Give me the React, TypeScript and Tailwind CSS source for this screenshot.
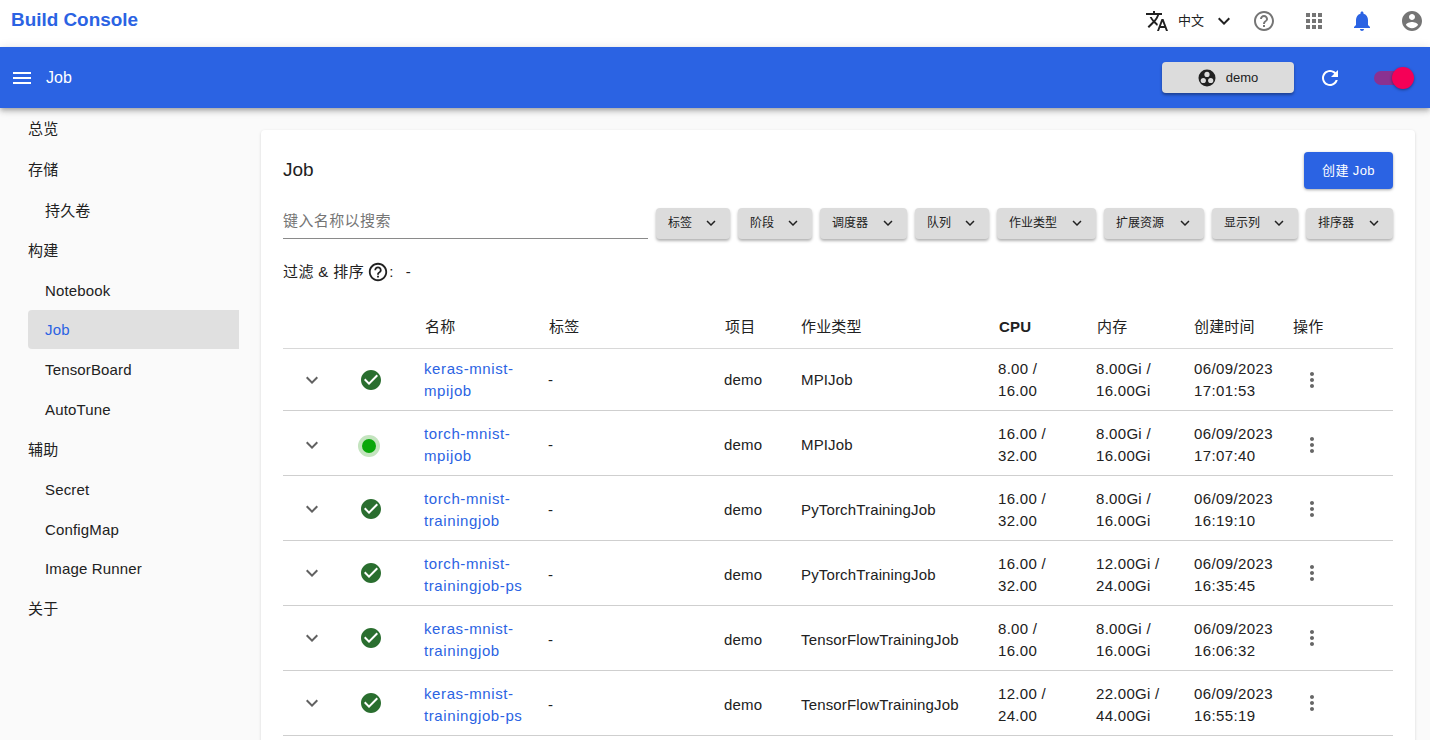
import React from "react";

const P = {
  translate: "m12.87 15.07-2.54-2.51.03-.03c1.74-1.94 2.98-4.17 3.71-6.53H17V4h-7V2H8v2H1v1.99h11.17C11.5 7.92 10.43 9.75 9 11.35 8.07 10.32 7.3 9.19 6.69 8h-2c.73 1.63 1.73 3.17 2.98 4.56l-5.09 5.02L4 19l5-5 3.11 3.11.76-2.04zM18.5 10h-2L12 22h2l1.12-3h4.75L21 22h2l-4.5-12zm-2.62 7 1.62-4.33L19.12 17h-3.24z",
  help: "M11 18h2v-2h-2v2zm1-16C6.48 2 2 6.48 2 12s4.48 10 10 10 10-4.48 10-10S17.52 2 12 2zm0 18c-4.41 0-8-3.59-8-8s3.59-8 8-8 8 3.59 8 8-3.59 8-8 8zm0-14c-2.21 0-4 1.79-4 4h2c0-1.1.9-2 2-2s2 .9 2 2c0 2-3 1.75-3 5h2c0-2.25 3-2.5 3-5 0-2.21-1.79-4-4-4z",
  apps: "M4 8h4V4H4v4zm6 12h4v-4h-4v4zm-6 0h4v-4H4v4zm0-6h4v-4H4v4zm6 0h4v-4h-4v4zm6-10v4h4V4h-4zm-6 4h4V4h-4v4zm6 6h4v-4h-4v4zm0 6h4v-4h-4v4z",
  bell: "M12 22c1.1 0 2-.9 2-2h-4c0 1.1.89 2 2 2zm6-6v-5c0-3.07-1.64-5.64-4.5-6.32V4c0-.83-.67-1.5-1.5-1.5s-1.5.67-1.5 1.5v.68C7.63 5.36 6 7.92 6 11v5l-2 2v1h16v-1l-2-2z",
  account: "M12 2C6.48 2 2 6.48 2 12s4.48 10 10 10 10-4.48 10-10S17.52 2 12 2zm0 3c1.66 0 3 1.34 3 3s-1.34 3-3 3-3-1.34-3-3 1.34-3 3-3zm0 14.2c-2.5 0-4.71-1.28-6-3.22.03-1.99 4-3.08 6-3.08 1.99 0 5.97 1.09 6 3.08-1.29 1.94-3.5 3.22-6 3.22z",
  menu: "M3 18h18v-2H3v2zm0-5h18v-2H3v2zm0-7v2h18V6H3z",
  refresh: "M17.65 6.35C16.2 4.9 14.21 4 12 4c-4.42 0-7.99 3.58-7.99 8s3.57 8 7.99 8c3.73 0 6.84-2.55 7.73-6h-2.08c-.82 2.33-3.04 4-5.65 4-3.31 0-6-2.69-6-6s2.69-6 6-6c1.66 0 3.14.69 4.22 1.78L13 11h7V4l-2.35 2.35z",
  expand: "M16.59 8.59 12 13.17 7.41 8.59 6 10l6 6 6-6z",
  check: "M12 2C6.48 2 2 6.48 2 12s4.48 10 10 10 10-4.48 10-10S17.52 2 12 2zm-2 15-5-5 1.41-1.41L10 14.17l7.59-7.59L19 8l-9 9z",
  more: "M12 8c1.1 0 2-.9 2-2s-.9-2-2-2-2 .9-2 2 .9 2 2 2zm0 2c-1.1 0-2 .9-2 2s.9 2 2 2 2-.9 2-2-.9-2-2-2zm0 6c-1.1 0-2 .9-2 2s.9 2 2 2 2-.9 2-2-.9-2-2-2z",
};

function Icon({ d, className }: { d: string; className: string }) {
  return (
    <svg viewBox="0 0 24 24" fill="currentColor" className={className}>
      <path d={d} />
    </svg>
  );
}

const nav: { label: string; h: string; sub?: boolean; active?: boolean }[] = [
  { label: "总览", h: "h-[41px]" },
  { label: "存储", h: "h-[41px]" },
  { label: "持久卷", sub: true, h: "h-[40px]" },
  { label: "构建", h: "h-[40px]" },
  { label: "Notebook", sub: true, h: "h-[40px]" },
  { label: "Job", sub: true, active: true, h: "h-[39px]" },
  { label: "TensorBoard", sub: true, h: "h-[40.5px]" },
  { label: "AutoTune", sub: true, h: "h-[39.5px]" },
  { label: "辅助", h: "h-[40px]" },
  { label: "Secret", sub: true, h: "h-[40px]" },
  { label: "ConfigMap", sub: true, h: "h-[39.5px]" },
  { label: "Image Runner", sub: true, h: "h-[39.5px]" },
  { label: "关于", h: "h-[39.5px]" },
];

const filters: [string, string][] = [
  ["标签", "w-[74px]"],
  ["阶段", "w-[74px]"],
  ["调度器", "w-[87px]"],
  ["队列", "w-[74px]"],
  ["作业类型", "w-[99px]"],
  ["扩展资源", "w-[100px]"],
  ["显示列", "w-[86px]"],
  ["排序器", "w-[87px]"],
];

const rows = [
  { n1: "keras-mnist-", n2: "mpijob", type: "MPIJob", c1: "8.00 /", c2: "16.00", m1: "8.00Gi /", m2: "16.00Gi", t: "17:01:53", h: "h-[62px]", up: "" },
  { n1: "torch-mnist-", n2: "mpijob", type: "MPIJob", c1: "16.00 /", c2: "32.00", m1: "8.00Gi /", m2: "16.00Gi", t: "17:07:40", running: true, h: "h-[65px] pt-[3px]", up: "" },
  { n1: "torch-mnist-", n2: "trainingjob", type: "PyTorchTrainingJob", c1: "16.00 /", c2: "32.00", m1: "8.00Gi /", m2: "16.00Gi", t: "16:19:10", h: "h-[65px] pt-[3px]", up: "mb-[2px]" },
  { n1: "torch-mnist-", n2: "trainingjob-ps", type: "PyTorchTrainingJob", c1: "16.00 /", c2: "32.00", m1: "12.00Gi /", m2: "24.00Gi", t: "16:35:45", h: "h-[65px] pt-[3px]", up: "mb-[4px]" },
  { n1: "keras-mnist-", n2: "trainingjob", type: "TensorFlowTrainingJob", c1: "8.00 /", c2: "16.00", m1: "8.00Gi /", m2: "16.00Gi", t: "16:06:32", h: "h-[65px] pt-[3px]", up: "mb-[4px]" },
  { n1: "keras-mnist-", n2: "trainingjob-ps", type: "TensorFlowTrainingJob", c1: "12.00 /", c2: "24.00", m1: "22.00Gi /", m2: "44.00Gi", t: "16:55:19", h: "h-[65px] pt-[3px]", up: "mb-[4px]" },
];

const cols = "grid grid-cols-[58px_83px_124px_176px_77px_197px_98px_98px_99px_100px]";
const font = "font-['Liberation_Sans','Noto_Sans_CJK_SC',sans-serif]";

export default function App() {
  return (
    <div className={`h-screen overflow-hidden bg-[#fafafa] text-[#212121] flex flex-col ${font}`}>
      <header className="h-[47px] shrink-0 bg-white flex items-center pl-[11px] pr-[6px] pb-[6px]">
        <div className="text-[18.9px] font-bold text-[#2b63e3]">Build Console</div>
        <div className="ml-auto flex items-center">
          <Icon d={P.translate} className="w-6 h-6 text-[#212121]" />
          <span className="ml-[9px] text-[13px] text-[#212121]">中文</span>
          <Icon d={P.expand} className="ml-[8px] w-6 h-6 text-[#212121]" />
          <Icon d={P.help} className="ml-[16px] w-6 h-6 text-[#757575]" />
          <Icon d={P.apps} className="ml-[26px] w-6 h-6 text-[#757575]" />
          <Icon d={P.bell} className="ml-[24px] w-6 h-6 text-[#2b63e3]" />
          <Icon d={P.account} className="ml-[26px] w-6 h-6 text-[#757575]" />
        </div>
      </header>
      <div className="relative z-10 h-[61px] shrink-0 bg-[#2b63e3] shadow-[0_2px_4px_-1px_rgba(0,0,0,0.2),0_4px_5px_0_rgba(0,0,0,0.14),0_1px_10px_0_rgba(0,0,0,0.12)] flex items-center pl-[10px] pr-[16px] text-white">
        <Icon d={P.menu} className="w-6 h-6" />
        <span className="ml-[12px] text-[16px]">Job</span>
        <button className="ml-auto w-[132px] h-[31px] rounded bg-[#dcdcdc] text-[#212121] shadow-[0_2px_3px_rgba(0,0,0,0.35)] flex items-center justify-center gap-[10px] text-[13px]">
          <svg viewBox="0 0 18 18" className="w-[18px] h-[18px]">
            <circle cx="9" cy="9" r="8.5" fill="#212121" />
            <circle cx="9" cy="5.4" r="2.6" fill="#dcdcdc" />
            <circle cx="5.3" cy="11.5" r="2.6" fill="#dcdcdc" />
            <circle cx="12.7" cy="11.5" r="2.6" fill="#dcdcdc" />
          </svg>
          <span>demo</span>
        </button>
        <Icon d={P.refresh} className="ml-[24px] w-6 h-6" />
        <div className="relative ml-[32px] w-[40px] h-[24px] flex items-center">
          <div className="w-[34px] h-[14px] rounded-full bg-[#8a3191]" />
          <div className="absolute right-0 top-[1px] w-[22px] h-[22px] rounded-full bg-[#f50057] shadow-[0_1px_3px_rgba(0,0,0,0.4)]" />
        </div>
      </div>
      <div className="flex flex-1 min-h-0">
        <aside className="w-[261px] shrink-0 pl-[28px] pr-[22px] text-[15px] tracking-[0.15px] text-[#212121]">
          {nav.map((n) => (
            <div
              key={n.label}
              className={`${n.h} pt-[2px] flex items-center ${n.sub ? "pl-[17px]" : ""} ${n.active ? "bg-[#e0e0e0] text-[#2b63e3] rounded-l" : ""}`}
            >
              {n.label}
            </div>
          ))}
        </aside>
        <main className="flex-1 min-w-0 pt-[22px] pr-[15px]">
          <div className="bg-white rounded shadow-[0_1px_3px_rgba(0,0,0,0.15)] px-[22px] pt-[22px] pb-8">
            <div className="flex items-center justify-between h-[37px]">
              <h1 className="text-[19px] text-[#212121]">Job</h1>
              <button className="w-[89px] h-[37px] rounded bg-[#2b63e3] text-white text-[13px] tracking-[0.4px] shadow-[0_1px_3px_rgba(0,0,0,0.35)]">创建 Job</button>
            </div>
            <div className="mt-[19px] flex items-start justify-between">
              <div className="w-[365px] h-[31px] pb-[3px] border-b border-[#8a8a8a] flex items-center text-[15px] tracking-[0.4px] text-[#757575]">键入名称以搜索</div>
              <div className="flex gap-[8px]">
                {filters.map(([label, w]) => (
                  <button key={label} className={`${w} h-[31px] pb-[2px] rounded bg-[#dcdcdc] text-[12px] text-[#212121] shadow-[0_2px_3px_rgba(0,0,0,0.3)] flex items-center justify-between pl-[12px] pr-[10px]`}>
                    <span>{label}</span>
                    <Icon d={P.expand} className="w-[18px] h-[18px]" />
                  </button>
                ))}
              </div>
            </div>
            <div className="mt-[21px] h-[24px] flex items-center text-[15px] tracking-[0.4px]">
              <span>过滤 &amp; 排序</span>
              <Icon d={P.help} className="ml-[3px] w-[22px] h-[22px] text-[#212121]" />
              <span>:</span>
              <span className="ml-[12px]">-</span>
            </div>
            <div className={`${cols} mt-[24px] h-[41px] pb-[2px] items-center border-b border-[#d8d8d8] text-[15px] tracking-[0.15px]`}>
              <div />
              <div />
              <div className="pl-px">名称</div>
              <div className="pl-px">标签</div>
              <div className="pl-px">项目</div>
              <div>作业类型</div>
              <div className="pl-px font-bold">CPU</div>
              <div className="pl-px">内存</div>
              <div>创建时间</div>
              <div>操作</div>
            </div>
            {rows.map((r) => (
              <div key={r.n1 + r.n2} className={`${cols} ${r.h} items-center border-b border-[#cfcfcf] text-[15px] leading-[22px] tracking-[0.15px]`}>
                <div className={`flex justify-center ${r.up}`}>
                  <Icon d={P.expand} className="w-6 h-6 text-[#616161]" />
                </div>
                <div className={`pl-[17px] flex items-center ${r.up}`}>
                  {r.running ? (
                    <div className="mt-[2px] w-[22px] h-[22px] rounded-full bg-[#c4e4bf] flex items-center justify-center">
                      <div className="w-[14px] h-[14px] rounded-full bg-[#0aa70a]" />
                    </div>
                  ) : (
                    <Icon d={P.check} className="ml-[1px] w-6 h-6 text-[#2a6e2f]" />
                  )}
                </div>
                <div className="text-[#2b63e3] tracking-[0.6px]">
                  <div>{r.n1}</div>
                  <div>{r.n2}</div>
                </div>
                <div>-</div>
                <div>demo</div>
                <div>{r.type}</div>
                <div className="tracking-[0.3px]">
                  <div>{r.c1}</div>
                  <div>{r.c2}</div>
                </div>
                <div className="tracking-[0.3px]">
                  <div>{r.m1}</div>
                  <div>{r.m2}</div>
                </div>
                <div className="tracking-[0.4px]">
                  <div>06/09/2023</div>
                  <div>{r.t}</div>
                </div>
                <div className={`pl-[7px] ${r.up}`}>
                  <Icon d={P.more} className="w-6 h-6 text-[#666666]" />
                </div>
              </div>
            ))}
          </div>
        </main>
      </div>
    </div>
  );
}
